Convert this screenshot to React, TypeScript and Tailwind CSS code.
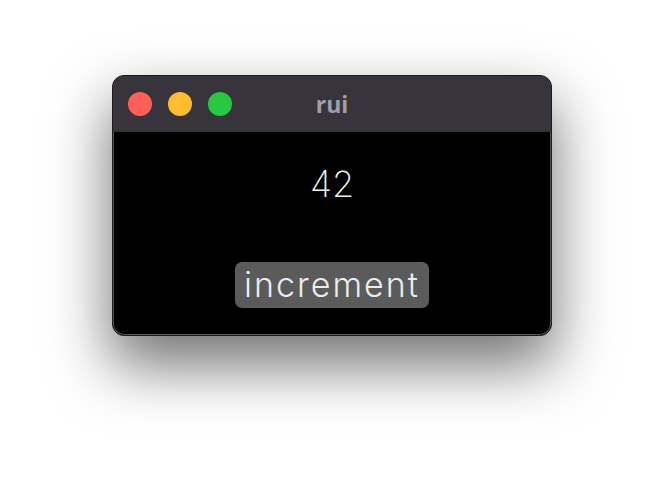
export default function App() {
  return (
    <div className="min-h-[484px] w-full bg-white pt-[75px]">
      <div className="mx-auto flex h-[261px] w-[440px] flex-col overflow-hidden rounded-[12px] border border-[#1c1c1e] bg-black shadow-[0_28px_60px_2px_rgba(0,0,0,0.55),inset_0_0_0_1px_#555]">
        <div className="relative flex h-[56px] shrink-0 items-center bg-[#37353b] px-[15px]">
          <div className="flex gap-[16px]">
            <span className="h-[24px] w-[24px] rounded-full bg-[#fe5f57]" />
            <span className="h-[24px] w-[24px] rounded-full bg-[#febc2e]" />
            <span className="h-[24px] w-[24px] rounded-full bg-[#28c840]" />
          </div>
          <div className="absolute inset-0 flex items-center justify-center font-['Open_Sans',sans-serif] text-[23px] font-bold text-[#a19fa6]">
            rui
          </div>
        </div>
        <div className="flex flex-1 flex-col items-center font-['Inter',sans-serif] text-white">
          <div className="mt-[34px] text-[36px] font-extralight leading-none text-[#f2f2f2]">42</div>
          <button className="mt-[60px] h-[46px] w-[194px] rounded-[7px] bg-[#5b5b5b] text-[34px] font-light leading-none tracking-[2px] text-[#ececec]">
            increment
          </button>
        </div>
      </div>
    </div>
  );
}
